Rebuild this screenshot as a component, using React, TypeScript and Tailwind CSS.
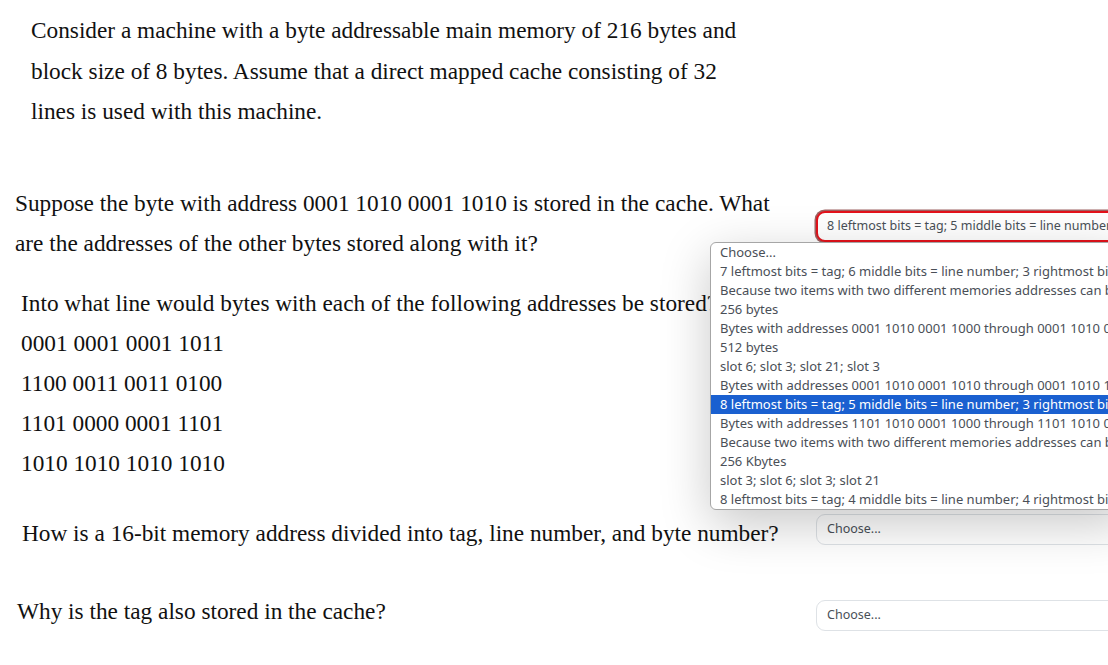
import React from 'react';

const options = [
  'Choose...',
  '7 leftmost bits = tag; 6 middle bits = line number; 3 rightmost bits = byte number',
  'Because two items with two different memories addresses can be stored in the same place in the cache',
  '256 bytes',
  'Bytes with addresses 0001 1010 0001 1000 through 0001 1010 0001 1111',
  '512 bytes',
  'slot 6; slot 3; slot 21; slot 3',
  'Bytes with addresses 0001 1010 0001 1010 through 0001 1010 1111 1111',
  '8 leftmost bits = tag; 5 middle bits = line number; 3 rightmost bits = byte number',
  'Bytes with addresses 1101 1010 0001 1000 through 1101 1010 0001 1111',
  'Because two items with two different memories addresses can be stored in the same place in the cache',
  '256 Kbytes',
  'slot 3; slot 6; slot 3; slot 21',
  '8 leftmost bits = tag; 4 middle bits = line number; 4 rightmost bits = byte number',
];

const SELECTED = 8;

const serif = { fontFamily: '"Liberation Serif", "Times New Roman", serif' };

function Select({ value, focused = false }: { value: string; focused?: boolean }) {
  return (
    <div
      className={
        focused
          ? 'w-[320px] h-[31px] shrink-0 rounded-[9px] border-2 border-[#e3121b] shadow-[0_0_0_1.5px_rgba(125,45,45,0.75)] bg-white flex items-center pl-[9px] text-[12.5px] text-[#495057] whitespace-nowrap overflow-hidden'
          : 'w-[320px] h-[31px] shrink-0 rounded-[9px] border border-[#dee2e6] bg-white flex items-center pl-[10px] text-[12.5px] text-[#495057] whitespace-nowrap overflow-hidden'
      }
      style={{ fontFamily: '"Noto Sans", sans-serif' }}
    >
      {value}
    </div>
  );
}

export default function App() {
  return (
    <div className="w-[1108px] h-[665px] overflow-hidden flex bg-white relative">
      <div className="flex-1 relative z-10 text-[23.3px] text-[#111] leading-[40.5px]" style={serif}>
        {/* Intro */}
        <p className="pl-[31px] pt-[10px] w-[780px]">
          Consider a machine with a byte addressable main memory of 216 bytes and
          <br />
          block size of 8 bytes. Assume that a direct mapped cache consisting of 32
          <br />
          lines is used with this machine.
        </p>

        {/* Question 1 */}
        <div className="flex mt-[51px]">
          <p className="pl-[15px] w-[816px] shrink-0 whitespace-nowrap">
            Suppose the byte with address 0001 1010 0001 1010 is stored in the cache. What
            <br />
            are the addresses of the other bytes stored along with it?
          </p>
          <div className="mt-[28px]">
            <Select value="8 leftmost bits = tag; 5 middle bits = line number; 3 rightmost bits = byte number" focused />
          </div>
        </div>

        {/* Question 2 */}
        <div className="flex mt-[19px] leading-[40px]">
          <div className="pl-[21px] w-[816px] shrink-0 whitespace-nowrap">
            <p>Into what line would bytes with each of the following addresses be stored?</p>
            <p>0001 0001 0001 1011</p>
            <p>1100 0011 0011 0100</p>
            <p>1101 0000 0001 1101</p>
            <p>1010 1010 1010 1010</p>
          </div>
        </div>

        {/* Question 3 */}
        <div className="flex mt-[30px]">
          <p className="pl-[22px] w-[816px] shrink-0 whitespace-nowrap">
            How is a 16-bit memory address divided into tag, line number, and byte number?
          </p>
          <div className="mt-[1px]">
            <Select value="Choose..." />
          </div>
        </div>

        {/* Question 4 */}
        <div className="flex mt-[38px]">
          <p className="pl-[17px] w-[816px] shrink-0">Why is the tag also stored in the cache?</p>
          <div className="mt-[9px]">
            <Select value="Choose..." />
          </div>
        </div>

        {/* Open dropdown list */}
        <ul
          className="absolute left-[710px] top-[242px] w-[420px] bg-white border border-[#a6a6a6] rounded-[6px] shadow-[0_14px_50px_rgba(0,0,0,0.22)] text-[13px] leading-[19px] text-[#4a4f57] overflow-hidden"
          style={{ fontFamily: '"Noto Sans", sans-serif' }}
        >
          {options.map((o, i) => (
            <li
              key={i}
              className={
                i === SELECTED
                  ? 'h-[19px] pl-[9px] whitespace-nowrap bg-[#1a60d0] text-white'
                  : 'h-[19px] pl-[9px] whitespace-nowrap'
              }
            >
              {o}
            </li>
          ))}
        </ul>
      </div>
      <div className="w-[8px] shrink-0 bg-[#f1f1f1]" />
    </div>
  );
}
